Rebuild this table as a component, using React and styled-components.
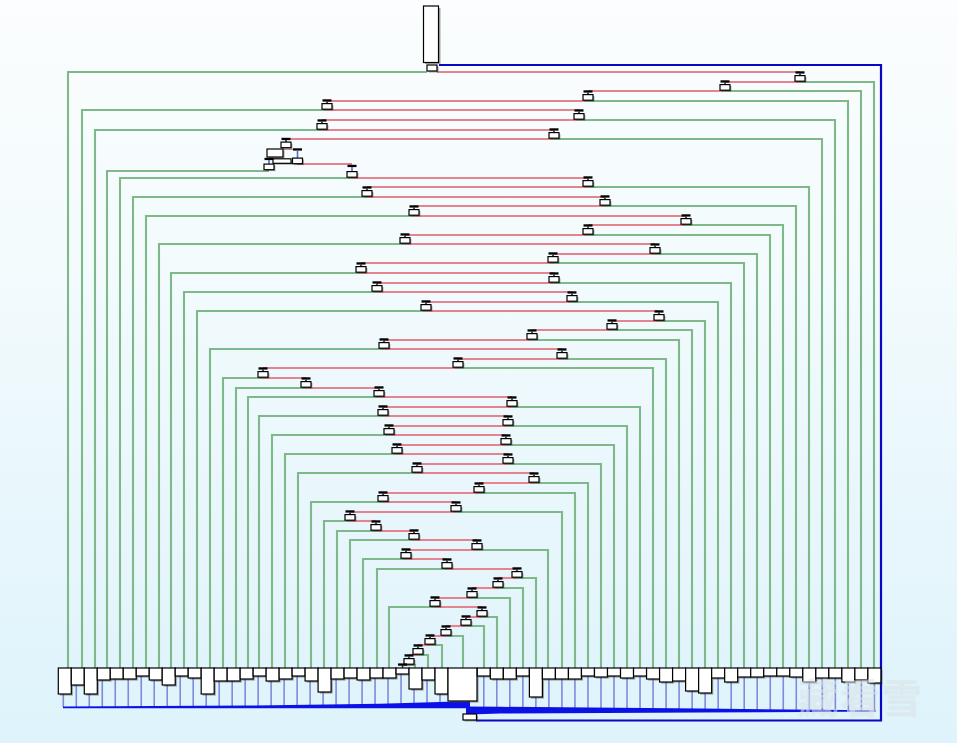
import React from 'react';
import styled, { createGlobalStyle } from 'styled-components';

const GlobalStyle = createGlobalStyle`
  html, body { margin: 0; padding: 0; }
  body { font-family: "Noto Sans CJK SC", "Noto Sans", sans-serif; }
`;

const tones = {
  green: '#7fb98a',
  red: '#e3848e',
  feed: '#7f89de',
  frame: '#0707c4',
  stub: '#5d66c9',
  dark: '#222222',
  band: '#0c12e6',
};

const Page = styled.div`
  position: relative;
  width: 957px;
  height: 743px;
  overflow: hidden;
  background: linear-gradient(180deg, #fbfdfe 0%, #f3fbfd 35%, #e9f7fc 65%, #def3fb 100%);
`;

const Diagram = styled.svg`
  display: block;
  width: 957px;
  height: 743px;
`;

const Wire = styled.polyline`
  fill: none;
  stroke: ${(p) => tones[p.$tone]};
  stroke-width: ${(p) => p.$w || 2.1};
  stroke-linejoin: miter;
`;

const Band = styled.polygon`
  fill: ${tones.band};
`;

const NodeBox = styled.rect`
  fill: #ffffff;
  stroke: #000000;
  stroke-width: 1.2;
`;

const BoxShadow = styled.rect`
  fill: rgba(60, 60, 60, 0.45);
`;

const TBar = styled.rect`
  fill: #000000;
`;

const Stub = styled.line`
  stroke: ${(p) => tones[p.$tone || 'stub']};
  stroke-width: ${(p) => p.$w || 1.6};
`;

const Watermark = styled.div`
  position: absolute;
  left: 798px;
  top: 672px;
  font-family: "Noto Sans CJK SC", "Noto Sans CJK TC", sans-serif;
  font-size: 40px;
  font-weight: 700;
  letter-spacing: 2px;
  line-height: 48px;
  color: rgba(238, 244, 246, 0.42);
  text-shadow: 0 0 1px rgba(170, 184, 190, 0.28);
  pointer-events: none;
`;

const BOX_TOP = 668;

const leftBottoms = [694,685,694,680,679,679,676,680,685,676,678,694,681,681,679,676,681,679,676,681,692,679,678,680,678,678,674,689,680,694];
const rightBottoms = [676,679,679,676,697,679,679,679,676,677,676,678,676,679,682,681,691,693,678,682,677,677,676,676,677,682,678,678,682,680,683];

const leftX = (i) => 58.3 + 12.99 * i;
const rightX = (j) => 477.3 + 13.02 * j;

// [x, y-out, green-target-x]
const upper = [
  [800, 82, 874], [725, 91, 861], [588, 101, 848], [327, 110, 82],
  [579, 120, 835], [322, 130, 95], [554, 139, 822],
];
const lower = [
  [352,178,120],[588,187,809],[367,197,133],[605,206,796],[414,216,146],[686,225,783],
  [588,235,770],[405,244,159],[655,254,757],[553,263,744],[361,273,171],[554,283,731],
  [377,292,184],[572,302,718],[426,311,197],[659,321,705],[612,330,692],[532,340,679],
  [384,349,210],[562,359,666],[458,368,653],[263,378,223],[306,388,236],[379,397,248],
  [512,407,640],[383,416,259],[508,426,627],[389,435,272],[506,445,614],[397,454,285],
  [508,464,601],[417,473,298],[534,483,588],[479,493,575],[383,502,311],[456,512,562],
  [350,521,324],[376,531,337],[414,540,350],[477,550,548],[406,559,363],[447,569,377],
  [517,578,536],[498,588,523],[472,598,510],[435,607,389],[482,617,497],[466,626,484],
  [446,636,463],[430,645,442],[418,655,428],[409,665,415],
];

function Node({ x, y, stub = 2 }) {
  const boxTop = y - 6.4;
  const barTop = boxTop - stub - 2.3;
  return (
    <g>
      <TBar x={x - 4.5} y={barTop} width={9} height={2.3} />
      <Stub x1={x} x2={x} y1={barTop + 2.3} y2={boxTop} $tone={stub > 3 ? 'stub' : 'dark'} />
      <BoxShadow x={x - 3.6} y={boxTop + 1.4} width={10} height={5.6} />
      <NodeBox x={x - 5} y={boxTop} width={10} height={5.6} />
    </g>
  );
}

function ChainWires({ list, from }) {
  const out = [];
  let prev = from;
  list.forEach(([x, y, gx], k) => {
    out.push(<Wire key={`r${k}`} $tone="red" points={`${prev[0]},${prev[1]} ${x},${prev[1]}`} />);
    out.push(<Wire key={`g${k}`} $tone="green" points={`${x},${y} ${gx},${y} ${gx},${BOX_TOP}`} />);
    prev = [x, y];
  });
  return out;
}

export default function App() {
  const lastLower = lower[lower.length - 1];
  const box26 = leftX(26) + 6.5;
  return (
    <Page>
      <GlobalStyle />
      <Diagram viewBox="0 0 957 743" xmlns="http://www.w3.org/2000/svg">
        {/* feed lines from switch cases */}
        {leftBottoms.map((b, i) => (
          <Wire key={`fl${i}`} $tone="feed" $w={1.6} points={`${leftX(i) + 5},${b} ${leftX(i) + 5},707`} />
        ))}
        {rightBottoms.map((b, j) => (
          <Wire key={`fr${j}`} $tone="feed" $w={1.6} points={`${rightX(j) + 6.5},${b} ${rightX(j) + 6.5},710.5`} />
        ))}
        <Wire $tone="feed" $w={1.6} points="847,711 876,711" />
        <Band points="63,706.4 250,705.6 380,703.8 448,701.8 470,701.5 470,708.2 63,708.2" />
        <Band points="466,706.5 500,706.8 700,708.6 847,710 847,711.8 700,712.4 500,713.6 477,714.3 466,714.3" />

        {/* outer frame */}
        <Wire $tone="frame" $w={2.2} points="439,65 881,65 881,720.5 476,720.5" />

        {/* root green + chain */}
        <Wire $tone="green" points={`427,72 68,72 68,${BOX_TOP}`} />
        <ChainWires list={upper} from={[437, 72]} />
        <Wire $tone="red" points="554,139 286,139" />
        {/* cluster */}
        <Wire $tone="red" points="302,164 352,164" />
        <Wire $tone="green" points={`269,171 107,171 107,${BOX_TOP}`} />
        <Wire $tone="green" $w={1.5} points="276,163.5 292,163.5" />
        <Wire $tone="red" $w={1} points="283,149.5 297,149.5" />
        <ChainWires list={lower} from={[297, 164]} />
        <Wire $tone="red" points={`${lastLower[0]},${lastLower[1]} ${box26},${lastLower[1]}`} />

        {/* top block */}
        <BoxShadow x={425} y={8} width={15.5} height={56} />
        <NodeBox x={423.5} y={6} width={15} height={56.5} />
        <BoxShadow x={428.5} y={66.5} width={10} height={6} />
        <NodeBox x={427} y={65} width={10} height={6} />

        {upper.map(([x, y], k) => <Node key={`u${k}`} x={x} y={y} />)}
        <Node x={286} y={148.5} />
        <BoxShadow x={268.5} y={150.5} width={16} height={8} />
        <NodeBox x={267} y={149} width={16} height={8} />
        <BoxShadow x={274.5} y={160} width={18} height={4.5} />
        <NodeBox x={273} y={158.8} width={18} height={4.5} />
        <Node x={297.5} y={164.5} stub={7.5} />
        <Node x={269} y={170.5} stub={4} />
        <Node x={352} y={178} stub={4.5} />
        {lower.slice(1).map(([x, y], k) => <Node key={`l${k}`} x={x} y={y} />)}

        {/* switch cases */}
        {leftBottoms.map((b, i) => (
          <g key={`bl${i}`}>
            <BoxShadow x={leftX(i) + 1.6} y={BOX_TOP + 1.6} width={13} height={b - BOX_TOP} />
            <NodeBox x={leftX(i)} y={BOX_TOP} width={13} height={b - BOX_TOP} />
          </g>
        ))}
        <BoxShadow x={449.6} y={BOX_TOP + 1.6} width={29} height={33} />
        <NodeBox x={448} y={BOX_TOP} width={29} height={33} />
        {rightBottoms.map((b, j) => (
          <g key={`br${j}`}>
            <BoxShadow x={rightX(j) + 1.6} y={BOX_TOP + 1.6} width={13} height={b - BOX_TOP} />
            <NodeBox x={rightX(j)} y={BOX_TOP} width={13} height={b - BOX_TOP} />
          </g>
        ))}
        <TBar x={box26 - 4.5} y={663.4} width={9} height={2.3} />
        <Stub x1={box26} x2={box26} y1={665.5} y2={668} $tone="dark" />

        {/* collector */}
        <BoxShadow x={464.5} y={715.5} width={13.5} height={6} />
        <NodeBox x={463} y={714} width={13.5} height={6} />
      </Diagram>
      <Watermark>藏看雪</Watermark>
    </Page>
  );
}
